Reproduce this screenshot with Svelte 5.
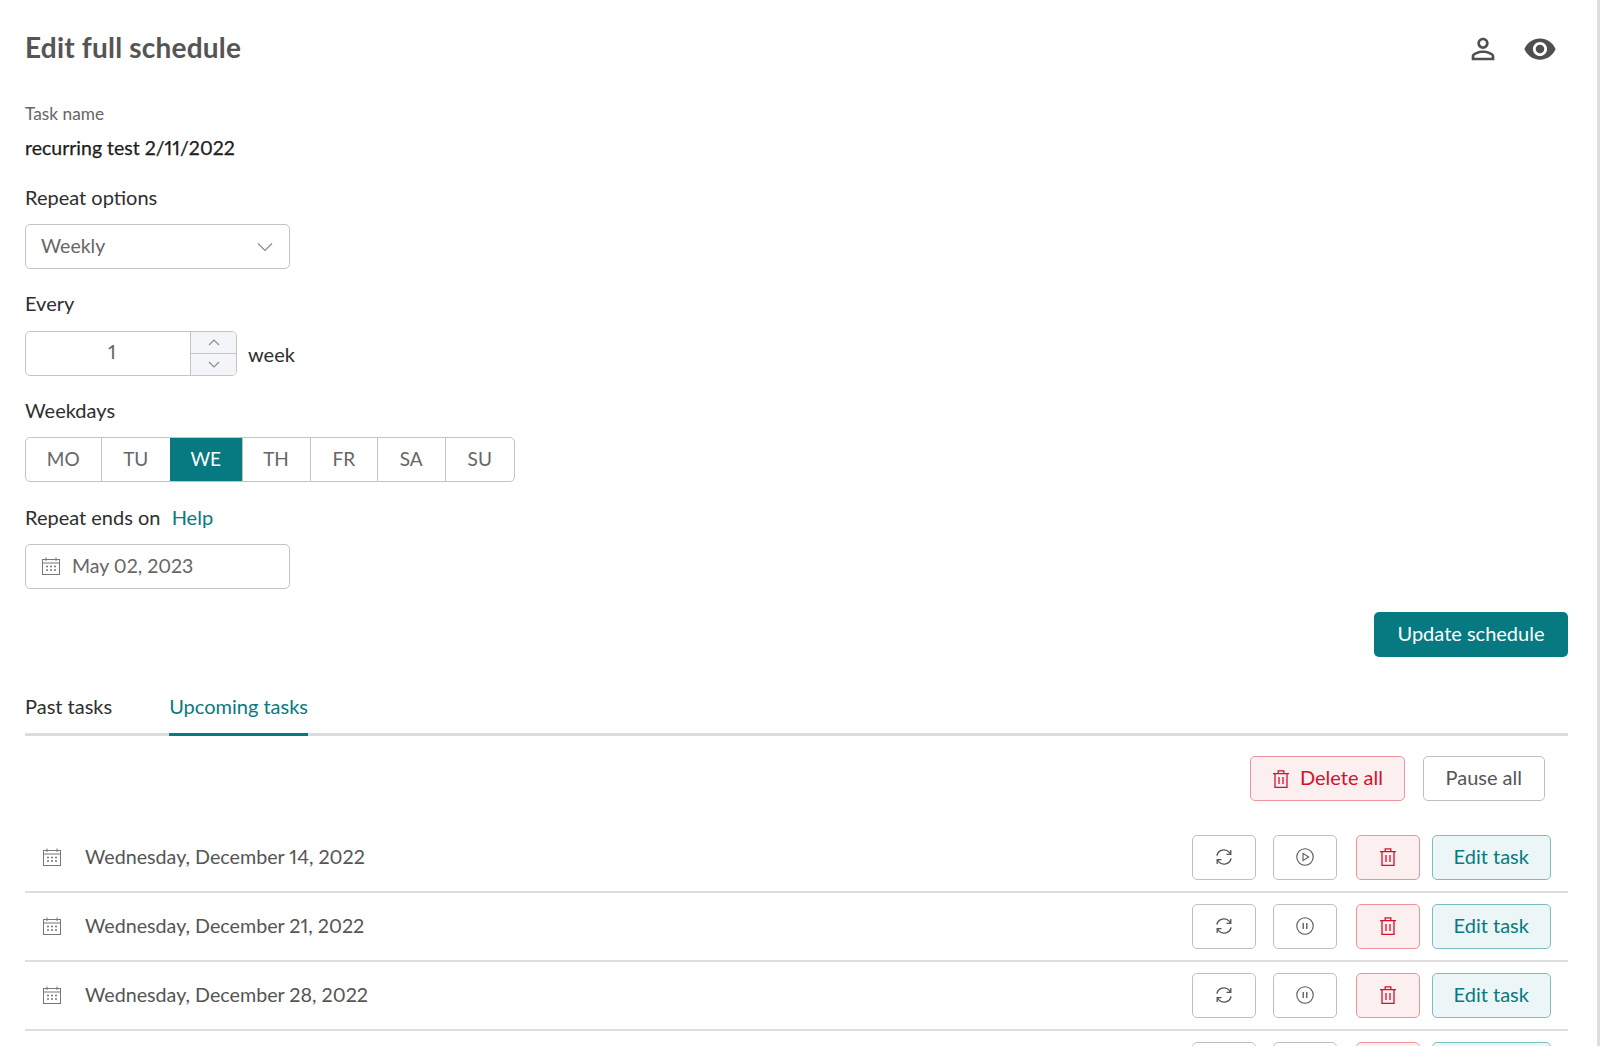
<script>
  const days = ['MO', 'TU', 'WE', 'TH', 'FR', 'SA', 'SU'];
  const rows = [
    { date: 'Wednesday, December 14, 2022', paused: true },
    { date: 'Wednesday, December 21, 2022', paused: false },
    { date: 'Wednesday, December 28, 2022', paused: false },
    { date: '', paused: false }
  ];
</script>

{#snippet calendar()}
  <svg class="cal" viewBox="0 0 18 18" fill="none" stroke="currentColor" stroke-width="1">
    <rect x="0.5" y="2.5" width="17" height="15" />
    <path d="M0.5 6h17M4 0.5v3.5M14 0.5v3.5" />
    <path d="M4 9.5h2M8 9.5h2M12 9.5h2M4 13h2M8 13h2M12 13h2" stroke-width="1.4" />
  </svg>
{/snippet}

{#snippet trash()}
  <svg class="trash" viewBox="0 0 18 18" fill="none" stroke="currentColor" stroke-width="1.3">
    <path d="M1 3.6h16M3 3.6v13.7h12V3.6M6.2 3.4V0.9h5.6v2.5M7 7v7M11 7v7" />
  </svg>
{/snippet}

<div class="page">
  <header class="head">
    <h1>Edit full schedule</h1>
    <div class="head-icons">
      <svg viewBox="0 0 24 24"><path d="M12 5.9c1.16 0 2.1.94 2.1 2.1s-.94 2.1-2.1 2.1S9.9 9.16 9.9 8s.94-2.1 2.1-2.1m0 9c2.97 0 6.1 1.46 6.1 2.1v1.1H5.9V17c0-.64 3.13-2.1 6.1-2.1M12 4C9.79 4 8 5.79 8 8s1.79 4 4 4 4-1.79 4-4-1.79-4-4-4zm0 9c-2.67 0-8 1.34-8 4v3h16v-3c0-2.66-5.33-4-8-4z" /></svg>
      <svg viewBox="0 0 24 24"><path d="M12 4.5C7 4.5 2.73 7.61 1 12c1.73 4.39 6 7.5 11 7.5s9.27-3.11 11-7.5c-1.73-4.39-6-7.5-11-7.5zM12 17c-2.76 0-5-2.24-5-5s2.24-5 5-5 5 2.24 5 5-2.24 5-5 5zm0-8c-1.66 0-3 1.34-3 3s1.34 3 3 3 3-1.34 3-3-1.34-3-3-3z" /></svg>
    </div>
  </header>

  <div class="small-label">Task name</div>
  <div class="task-name">recurring test 2/11/2022</div>

  <div class="label l-repeat">Repeat options</div>
  <div class="field select">
    <span>Weekly</span>
    <svg viewBox="0 0 16 10" fill="none" stroke="#8a8a8a" stroke-width="1.2"><path d="M1 1.5l7 7 7-7" /></svg>
  </div>

  <div class="label l-next">Every</div>
  <div class="every">
    <div class="stepper">
      <div class="num">1</div>
      <div class="arrows">
        <div><svg viewBox="0 0 12 7" fill="none" stroke="#8a8a8a" stroke-width="1.1"><path d="M1 6l5-5 5 5" /></svg></div>
        <div><svg viewBox="0 0 12 7" fill="none" stroke="#8a8a8a" stroke-width="1.1"><path d="M1 1l5 5 5-5" /></svg></div>
      </div>
    </div>
    <span class="week">week</span>
  </div>

  <div class="label l-next">Weekdays</div>
  <div class="days">
    {#each days as d}
      <div class="day" class:on={d === 'WE'}>{d}</div>
    {/each}
  </div>

  <div class="label l-ends">Repeat ends on <a href="#help">Help</a></div>
  <div class="field date">
    {@render calendar()}
    <span>May 02, 2023</span>
  </div>

  <div class="update-row"><button class="btn primary">Update schedule</button></div>

  <div class="tabs">
    <div class="tab">Past tasks</div>
    <div class="tab active">Upcoming tasks</div>
  </div>

  <div class="bulk">
    <button class="btn danger bulk-del">{@render trash()} Delete all</button>
    <button class="btn plain bulk-pause">Pause all</button>
  </div>

  <div class="rows">
    {#each rows as r}
      <div class="row">
        <div class="row-date">
          {#if r.date}{@render calendar()}<span>{r.date}</span>{/if}
        </div>
        <button class="btn plain icon" aria-label="Reschedule">
          <svg viewBox="0 0 18 18" fill="none" stroke="#555" stroke-width="1.4">
            <path d="M1.9 7.6A7.2 7.2 0 0 1 14.4 4.4L15.6 6" />
            <path d="M16.1 10.4A7.2 7.2 0 0 1 3.6 13.6L2.4 12" />
            <path d="M15.8 2V6.3H11.5M2.2 16V11.7H6.5" stroke-width="1.3" />
          </svg>
        </button>
        <button class="btn plain icon second" aria-label={r.paused ? 'Resume' : 'Pause'}>
          <svg viewBox="0 0 18 18" fill="none" stroke="#555" stroke-width="1.1">
            <circle cx="9" cy="9" r="8.2" />
            {#if r.paused}
              <path d="M7 5.4L12.6 9 7 12.6z" />
            {:else}
              <path d="M7.2 6v6M10.8 6v6" stroke-width="1.3" />
            {/if}
          </svg>
        </button>
        <button class="btn danger icon third" aria-label="Delete">{@render trash()}</button>
        <button class="btn teal">{r.date ? 'Edit task' : ''}</button>
      </div>
    {/each}
  </div>
</div>

<style>
  :global(html), :global(body) {
    margin: 0;
    height: 1046px;
    overflow: hidden;
    background: #fff;
  }
  .page {
    box-sizing: border-box;
    width: 1600px;
    height: 1046px;
    overflow: hidden;
    padding: 0 29px 0 25px;
    border-right: 3px solid #dedede;
    font-family: "Lato", "Open Sans", sans-serif;
    font-size: 20px;
    font-variant-numeric: proportional-nums;
    color: #2e2e2e;
  }
  .head {
    display: flex;
    justify-content: space-between;
    align-items: center;
    height: 97px;
  }
  h1 {
    margin: 0 0 3px;
    font-size: 28px;
    letter-spacing: 0.2px;
    font-weight: 700;
    color: #555;
  }
  .head-icons {
    display: flex;
    gap: 23px;
    margin-right: 11px;
    fill: #4f4f4f;
  }
  .head-icons svg { width: 34px; height: 34px; display: block; }
  .small-label {
    font-size: 17.3px;
    line-height: 20px;
    margin-top: 7px;
    color: #666;
  }
  .task-name {
    margin-top: 12px;
    font-size: 19.5px;
    line-height: 24px;
    -webkit-text-stroke: 0.25px #1c1c1c;
    color: #1c1c1c;
  }
  .label {
    font-size: 20px;
    line-height: 24px;
    color: #2e2e2e;
  }
  .l-repeat { margin-top: 25px; }
  .l-next { margin-top: 22px; }
  .l-ends { margin-top: 23px; }
  .label a { color: #067a80; text-decoration: none; margin-left: 6px; }
  .field {
    box-sizing: border-box;
    display: flex;
    align-items: center;
    width: 265px;
    height: 45px;
    margin-top: 15px;
    border: 1.5px solid #c4c4c4;
    border-radius: 5px;
    color: #666;
    font-size: 19.5px;
  }
  .select { justify-content: space-between; padding: 0 16px 3px 15px; }
  .select svg { width: 16px; height: 10px; margin-top: 3px; }
  .every { display: flex; align-items: center; gap: 11px; margin-top: 16px; }
  .stepper {
    box-sizing: border-box;
    display: flex;
    width: 212px;
    height: 45px;
    border: 1.5px solid #c4c4c4;
    border-radius: 5px;
    overflow: hidden;
  }
  .num { flex: 1; text-align: center; line-height: 38px; color: #666; padding-left: 8px; }
  .arrows {
    width: 45px;
    display: flex;
    flex-direction: column;
    background: #f4f5f8;
    border-left: 1.5px solid #c4c4c4;
  }
  .arrows div { flex: 1; display: flex; align-items: center; justify-content: center; }
  .arrows div:first-child { border-bottom: 1.5px solid #c4c4c4; }
  .arrows svg { width: 12px; height: 7px; }
  .week { margin-top: 0; color: #2e2e2e; }
  .days {
    box-sizing: border-box;
    display: grid;
    grid-template-columns: 74.5px 69.5px 71.5px 68px 67.5px 67.5px 1fr;
    width: 490px;
    height: 45px;
    margin-top: 15px;
    border: 1.5px solid #c4c4c4;
    border-radius: 5px;
    overflow: hidden;
    color: #666;
    font-size: 19px;
  }
  .day {
    display: flex;
    align-items: center;
    justify-content: center;
    padding-bottom: 3px;
    border-left: 1.5px solid #c4c4c4;
  }
  .day:first-child { border-left: 0; }
  .day.on { background: #067a80; color: #fff; border-left: 0; }
  .date { padding: 0 0 2px 15px; gap: 13px; }
  .date .cal { margin-top: 1px; margin-left: 1px; margin-right: -1px; }
  .cal { width: 18px; height: 18px; color: #777; flex: none; }
  .update-row { display: flex; justify-content: flex-end; margin-top: 23px; }
  .btn {
    box-sizing: border-box;
    height: 45px;
    border-radius: 5px;
    font: inherit;
    padding: 0 0 3px;
    display: inline-flex;
    align-items: center;
    justify-content: center;
  }
  .primary { width: 194px; background: #067a80; border: 0; color: #fff; }
  .tabs {
    display: flex;
    gap: 57px;
    margin-top: 32px;
    border-bottom: 3px solid #dcdcdc;
    height: 44px;
    box-sizing: content-box;
  }
  .tab { line-height: 34px; height: 47px; box-sizing: border-box; }
  .tab.active { color: #067a80; border-bottom: 3px solid #067a80; }
  .bulk { display: flex; justify-content: flex-end; gap: 17px; padding-right: 23px; margin-top: 20px; }
  .plain { background: #fff; border: 1.5px solid #bfbfbf; color: #555; }
  .danger { background: #fbeff0; border: 1.5px solid #f0939d; color: #d5102c; }
  .teal { width: 119.5px; margin-left: 12px; background: #edf6f6; border: 1.5px solid #7dbcc0; color: #067a80; }
  .bulk-del { width: 155px; gap: 10px; }
  .bulk-del .trash { margin-top: 3px; }
  .bulk-pause { width: 122.5px; margin-left: 0.5px; }
  .trash { width: 18px; height: 18px; flex: none; }
  .rows { margin-top: 23px; }
  .row {
    box-sizing: border-box;
    display: flex;
    align-items: center;
    height: 69px;
    padding: 0 17px 0 0;
    border-bottom: 2.5px solid #dedede;
  }
  .row-date { flex: 1; display: flex; align-items: center; gap: 24px; padding: 0 0 3px 18px; color: #555; font-size: 19.7px; }
  .row-date .cal { margin-top: 1px; }
  .icon { width: 64px; padding: 0 0 1px; }
  .icon svg { width: 18px; height: 18px; }
  .second { margin-left: 17.5px; }
  .third { margin-left: 18.5px; }
</style>
